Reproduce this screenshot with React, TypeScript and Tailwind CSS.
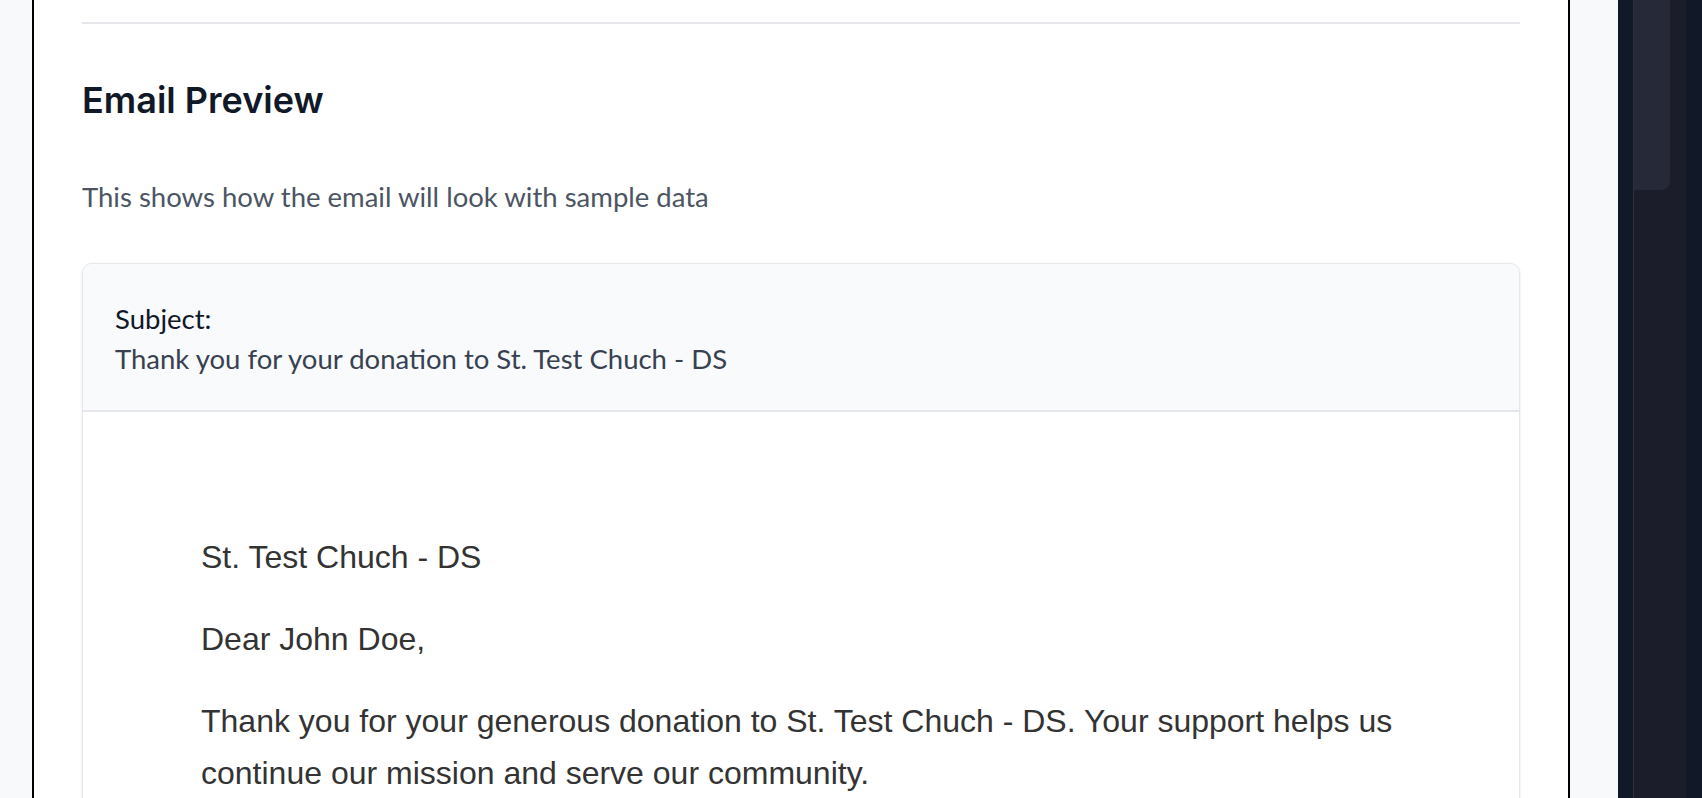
const sans = "font-['Lato','Noto_Sans',sans-serif]"

const EmailPreview = () => {
    return (
        <div className="pt-[22px]">
            <div className="border-t-2 border-[#e5e7eb]" />

            <h2 className="mt-[54px] font-['Inter',sans-serif] text-[36px] leading-[44px] font-semibold text-[#111827]">
                Email Preview
            </h2>

            <p className={`${sans} mt-[57px] text-[27.5px] leading-[36px] text-[#4b5563]`}>
                This shows how the email will look with sample data
            </p>

            <div className="mt-[48px] rounded-[10px] border border-[#e5e7eb] bg-white shadow-sm overflow-hidden">
                <div className={`${sans} bg-[#f9fafb] border-b-2 border-[#e5e7eb] px-[32px] pt-[35px] pb-[31px]`}>
                    <div className="text-[27.5px] leading-[40px] text-[#111827]">Subject:</div>
                    <div className="text-[27.5px] leading-[40px] text-[#374151]">
                        Thank you for your donation to St. Test Chuch - DS
                    </div>
                </div>

                <div className="pt-[119px] pl-[118px] pr-[100px] pb-[60px] font-['Liberation_Sans',Arial,sans-serif] text-[32px] leading-[52px] text-[#333333]">
                    <p className="mb-[30px]">St. Test Chuch - DS</p>
                    <p className="mb-[30px]">Dear John Doe,</p>
                    <p className="mb-[30px]">
                        Thank you for your generous donation to St. Test Chuch - DS. Your support helps us continue our mission and serve our community.
                    </p>
                </div>
            </div>
        </div>
    )
}

export default function App() {
    return (
        <div className="flex h-[798px] w-full overflow-hidden bg-[#f8f9fb]">
            <div className="w-[32px] shrink-0" />
            <div className="w-[1538px] shrink-0 border-2 border-black border-t-0 bg-white px-[48px] h-[820px]">
                <EmailPreview />
            </div>
            <div className="w-[48px] shrink-0" />
            {/* right side panel, cut off */}
            <div className="flex flex-1 bg-[#111827]">
                <div className="w-[15px] shrink-0" />
                <div className="w-[53px] shrink-0 border-l border-[#2c313d] bg-[#1b1e2a]">
                    <div className="h-[190px] w-[36px] rounded-br-[9px] bg-[#262a38]" />
                </div>
                <div className="flex-1" />
            </div>
        </div>
    )
}
